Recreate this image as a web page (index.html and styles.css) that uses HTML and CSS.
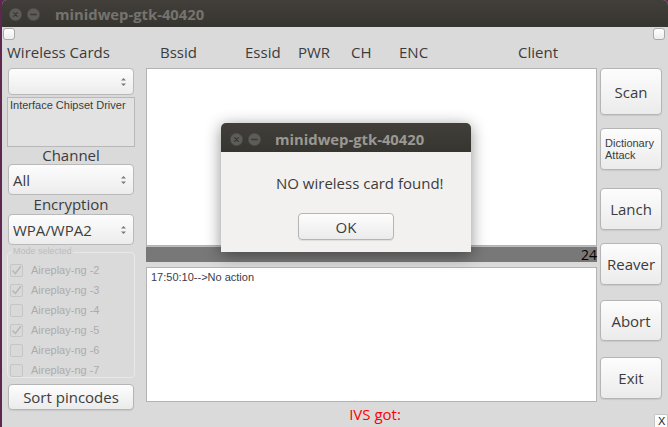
FILE: index.html
```html
<!DOCTYPE html>
<html>
<head>
<meta charset="utf-8">
<link rel="stylesheet" href="styles.css">
</head>
<body>
<div class="window">
  <div class="titlebar">
    <svg class="wbtn" width="13" height="13" viewBox="0 0 13 13"><circle cx="6.5" cy="6.5" r="6.2" fill="#5d5c58" stroke="#4a4945" stroke-width="0.6"/><path d="M4.6 4.6 L8.4 8.4 M8.4 4.6 L4.6 8.4" stroke="#3a3935" stroke-width="1.3" stroke-linecap="round"/></svg>
    <svg class="wbtn" width="13" height="13" viewBox="0 0 13 13"><circle cx="6.5" cy="6.5" r="6.2" fill="#5d5c58" stroke="#4a4945" stroke-width="0.6"/><path d="M3.8 6.5 L9.2 6.5" stroke="#3a3935" stroke-width="1.4" stroke-linecap="round"/></svg>
    <span class="title main-title">minidwep-gtk-40420</span>
  </div>
  <div class="toprow"><span class="tiny-check"></span><span class="tiny-check"></span></div>
  <div class="headers">
    <span class="h-wc">Wireless Cards</span>
    <span class="h-bssid">Bssid</span>
    <span class="h-essid">Essid</span>
    <span class="h-pwr">PWR</span>
    <span class="h-ch">CH</span>
    <span class="h-enc">ENC</span>
    <span class="h-client">Client</span>
  </div>
  <div class="main">
    <div class="left">
      <div class="combo combo-small"><span></span>
        <svg class="arrows" width="7" height="10" viewBox="0 0 7 10"><path d="M1 3.6 L3.5 1 L6 3.6 Z M1 6.4 L3.5 9 L6 6.4 Z" fill="#7a7a7a"/></svg>
      </div>
      <div class="iface">Interface Chipset Driver</div>
      <div class="lbl lbl-ch">Channel</div>
      <div class="combo"><span>All</span>
        <svg class="arrows" width="7" height="10" viewBox="0 0 7 10"><path d="M1 3.6 L3.5 1 L6 3.6 Z M1 6.4 L3.5 9 L6 6.4 Z" fill="#7a7a7a"/></svg>
      </div>
      <div class="lbl lbl-enc">Encryption</div>
      <div class="combo"><span>WPA/WPA2</span>
        <svg class="arrows" width="7" height="10" viewBox="0 0 7 10"><path d="M1 3.6 L3.5 1 L6 3.6 Z M1 6.4 L3.5 9 L6 6.4 Z" fill="#7a7a7a"/></svg>
      </div>
      <div class="frame">
        <span class="legend">Mode selected</span>
        <div class="crow"><span class="cbox on"><svg width="11" height="11" viewBox="0 0 11 11"><path d="M1.5 5.5 L4.3 8.5 L9.8 1.2" fill="none" stroke="#b9b9b9" stroke-width="1.7"/></svg></span>Aireplay-ng -2</div>
        <div class="crow"><span class="cbox on"><svg width="11" height="11" viewBox="0 0 11 11"><path d="M1.5 5.5 L4.3 8.5 L9.8 1.2" fill="none" stroke="#b9b9b9" stroke-width="1.7"/></svg></span>Aireplay-ng -3</div>
        <div class="crow"><span class="cbox"></span>Aireplay-ng -4</div>
        <div class="crow"><span class="cbox on"><svg width="11" height="11" viewBox="0 0 11 11"><path d="M1.5 5.5 L4.3 8.5 L9.8 1.2" fill="none" stroke="#b9b9b9" stroke-width="1.7"/></svg></span>Aireplay-ng -5</div>
        <div class="crow"><span class="cbox"></span>Aireplay-ng -6</div>
        <div class="crow"><span class="cbox"></span>Aireplay-ng -7</div>
      </div>
      <div class="btn btn-sort">Sort pincodes</div>
    </div>
    <div class="mid">
      <div class="list"></div>
      <div class="bar"><span>24</span></div>
      <div class="log">17:50:10--&gt;No action</div>
      <div class="ivs">IVS got:</div>
    </div>
    <div class="right">
      <div class="btn b-scan">Scan</div>
      <div class="btn b-dict">Dictionary<br>Attack</div>
      <div class="btn b-lanch">Lanch</div>
      <div class="btn b-reaver">Reaver</div>
      <div class="btn b-abort">Abort</div>
      <div class="btn b-exit">Exit</div>
      <div class="xbox">X</div>
    </div>
  </div>
</div>
<div class="dialog">
  <div class="dlg-title">
    <svg class="wbtn" width="13" height="13" viewBox="0 0 13 13"><circle cx="6.5" cy="6.5" r="6.2" fill="#5d5c58" stroke="#4a4945" stroke-width="0.6"/><path d="M4.6 4.6 L8.4 8.4 M8.4 4.6 L4.6 8.4" stroke="#3a3935" stroke-width="1.3" stroke-linecap="round"/></svg>
    <svg class="wbtn" width="13" height="13" viewBox="0 0 13 13"><circle cx="6.5" cy="6.5" r="6.2" fill="#5d5c58" stroke="#4a4945" stroke-width="0.6"/><path d="M3.8 6.5 L9.2 6.5" stroke="#3a3935" stroke-width="1.4" stroke-linecap="round"/></svg>
    <span class="title dlg-title-text">minidwep-gtk-40420</span>
  </div>
  <div class="dlg-msg">NO wireless card found!</div>
  <div class="btn dlg-ok">OK</div>
</div>
</body>
</html>
```

FILE: styles.css
```css
* { box-sizing: border-box; }
html, body { margin: 0; padding: 0; }
body {
  width: 668px;
  height: 427px;
  overflow: hidden;
  background: #5e2750;
  position: relative;
  font-family: "Open Sans", "DejaVu Sans", sans-serif;
  color: #3c3c3c;
}
.window {
  margin-left: 2px;
  width: 666px;
  height: 427px;
  background: #dadada;
  display: flex;
  flex-direction: column;
  overflow: hidden;
  border-radius: 5px 5px 0 0;
}
.titlebar {
  height: 27px;
  flex: none;
  background: linear-gradient(#423f3b, #37352f);
  display: flex;
  align-items: center;
  padding-left: 7px;
  padding-top: 1px;
}
.wbtn { flex: none; display: block; }
.titlebar .wbtn + .wbtn { margin-left: 5px; }
.title {
  font-weight: 700;
  font-size: 14.8px;
  line-height: 18px;
  white-space: nowrap;
}
.main-title { margin-left: 15px; color: #75736d; }

.toprow {
  height: 14px;
  flex: none;
  display: flex;
  justify-content: space-between;
  padding: 1px 3px 0 1px;
}
.tiny-check {
  width: 12px;
  height: 12px;
  border: 1px solid #a9a9a9;
  border-radius: 3px;
  background: linear-gradient(#ffffff, #ececec);
}
.headers {
  height: 27px;
  flex: none;
  display: flex;
  padding-left: 5px;
  padding-top: 1px;
  font-size: 15px;
  line-height: 20px;
  white-space: nowrap;
}
.h-wc { width: 153px; }
.h-bssid { width: 85px; }
.h-essid { width: 53px; }
.h-pwr { width: 53px; }
.h-ch { width: 48px; }
.h-enc { width: 119px; }

.main {
  flex: 1;
  display: flex;
  padding-left: 5px;
}
.left {
  width: 128px;
  flex: none;
  display: flex;
  flex-direction: column;
}
.combo {
  height: 31px;
  margin: 0 1px;
  border: 1px solid #b9b9b9;
  border-radius: 4px;
  background: linear-gradient(#fdfdfd, #ececec);
  display: flex;
  align-items: center;
  justify-content: space-between;
  padding: 0 6px 0 4px;
  font-size: 15px;
}
.combo-small { height: 27px; }
.arrows { display: block; }
.iface {
  margin-top: 2px;
  height: 50px;
  border: 1px solid #b8b8b8;
  background: #e2e2e2;
  font-family: "Liberation Sans", Arial, sans-serif;
  font-size: 11px;
  line-height: 13px;
  padding: 1px 0 0 2px;
  color: #3c3c3c;
}
.lbl {
  text-align: center;
  font-size: 15px;
}
.lbl-ch { height: 17px; line-height: 17px; }
.lbl-enc { height: 19px; line-height: 19px; }
.frame {
  position: relative;
  margin-top: 7px;
  height: 126px;
  border: 1px solid #e8e8e8;
  border-radius: 4px;
  padding: 7px 0 0 2px;
}
.legend {
  position: absolute;
  left: 4px;
  top: -7px;
  padding: 0 1px;
  background: #dadada;
  font-family: "Liberation Sans", Arial, sans-serif;
  font-size: 9px;
  line-height: 11px;
  color: #bdbdbd;
}
.crow {
  height: 20px;
  display: flex;
  align-items: center;
  font-family: "Liberation Sans", Arial, sans-serif;
  font-size: 11px;
  color: #acacac;
  white-space: nowrap;
}
.cbox {
  width: 13px;
  height: 13px;
  margin-right: 8px;
  border: 1px solid #c6c6c6;
  border-radius: 2px;
  background: #d9d9d9;
  display: flex;
  align-items: center;
  justify-content: center;
  flex: none;
}
.cbox svg { display: block; }
.btn {
  border: 1px solid #b5b5b5;
  border-radius: 4px;
  background: linear-gradient(#fdfdfd, #ebebeb);
  box-shadow: 0 1px 1px rgba(0,0,0,0.08);
  display: flex;
  align-items: center;
  justify-content: center;
  font-size: 15px;
  color: #3c3c3c;
  white-space: nowrap;
}
.btn-sort {
  margin: 6px 1px 0;
  height: 26px;
}

.mid {
  width: 451px;
  margin-left: 11px;
  flex: none;
  display: flex;
  flex-direction: column;
}
.list {
  height: 178px;
  background: #ffffff;
  border: 1px solid #b3b3b3;
  flex: none;
}
.bar {
  height: 16px;
  flex: none;
  border-top: 1px solid #bdbdbd;
  background: #787878;
  display: flex;
  justify-content: flex-end;
  align-items: center;
  font-size: 14px;
  line-height: 15px;
  color: #000;
}
.log {
  margin-top: 5px;
  height: 135px;
  flex: none;
  background: #ffffff;
  border: 1px solid #b3b3b3;
  font-family: "Liberation Sans", Arial, sans-serif;
  font-size: 11px;
  line-height: 13px;
  padding: 3px 0 0 4px;
  color: #3c3c4a;
}
.ivs {
  height: 25px;
  line-height: 24px;
  text-align: center;
  padding-left: 7px;
  color: #ff0000;
  font-size: 15px;
}
.right {
  width: 62px;
  margin-left: 3px;
  flex: none;
  display: flex;
  flex-direction: column;
}
.b-scan { height: 47px; }
.b-dict {
  margin-top: 13px;
  height: 42px;
  justify-content: flex-start;
  padding-left: 4px;
  font-family: "Liberation Sans", Arial, sans-serif;
  font-size: 11px;
  line-height: 12px;
  text-align: left;
}
.b-lanch { margin-top: 18px; height: 42px; }
.b-reaver { margin-top: 13px; height: 42px; }
.b-abort { margin-top: 15px; height: 41px; }
.b-exit { margin-top: 16px; height: 42px; }
.xbox {
  margin-top: 15px;
  margin-left: 54px;
  width: 14px;
  height: 13px;
  flex: none;
  background: #fdfdfd;
  border: 1px solid #c4c4c4;
  border-bottom: none;
  border-radius: 2px 2px 0 0;
  font-family: "Liberation Sans", Arial, sans-serif;
  font-size: 11px;
  line-height: 13px;
  padding-left: 3px;
  color: #222;
}

.dialog {
  position: absolute;
  left: 221px;
  top: 123px;
  width: 250px;
  height: 129px;
  background: #f2f1f0;
  border-radius: 5px 5px 0 0;
  box-shadow: 0 3px 16px rgba(0,0,0,0.45);
  display: flex;
  flex-direction: column;
}
.dlg-title {
  height: 29px;
  flex: none;
  background: linear-gradient(#423f3b, #37352f);
  border-radius: 5px 5px 0 0;
  display: flex;
  align-items: center;
  padding: 3px 0 0 9px;
}
.dlg-title .wbtn + .wbtn { margin-left: 5px; }
.dlg-title-text { margin-left: 14px; color: #9a9892; }
.dlg-msg {
  margin-top: 21px;
  padding-left: 55px;
  font-size: 15px;
  line-height: 20px;
  white-space: nowrap;
}
.dlg-ok {
  margin: 20px 0 0 77px;
  width: 96px;
  height: 27px;
}
```
